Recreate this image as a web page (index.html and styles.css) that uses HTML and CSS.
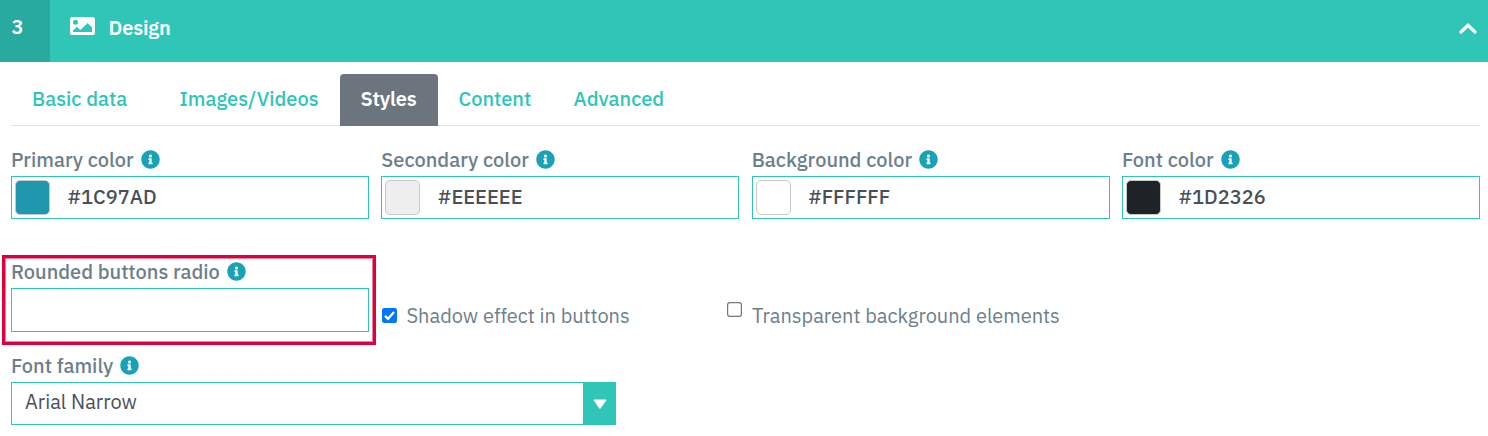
FILE: index.html
```
<!DOCTYPE html>
<html lang="en">
<head>
<meta charset="utf-8">
<title>Design</title>
<link rel="stylesheet" href="styles.css">
</head>
<body>
<svg class="defs" width="0" height="0">
  <symbol id="info" viewBox="0 0 512 512"><path fill="currentColor" d="M256 8C119 8 8 119 8 256s111 248 248 248 248-111 248-248S393 8 256 8zm0 110c23.200 0 42 18.800 42 42s-18.800 42-42 42-42-18.800-42-42 18.800-42 42-42zm56 254c0 6.600-5.400 12-12 12h-88c-6.600 0-12-5.400-12-12v-24c0-6.600 5.400-12 12-12h12v-64h-12c-6.600 0-12-5.400-12-12v-24c0-6.600 5.400-12 12-12h64c6.600 0 12 5.400 12 12v100h12c6.600 0 12 5.400 12 12v24z"/></symbol>
</svg>
<header class="header">
  <div class="step">3</div>
  <svg class="picture" viewBox="0 0 25 18"><path fill="#fff" fill-rule="evenodd" d="M2.200 0H22.800A2.200 2.200 0 0 1 25 2.200V15.800A2.200 2.200 0 0 1 22.800 18H2.200A2.200 2.200 0 0 1 0 15.800V2.200A2.200 2.200 0 0 1 2.200 0ZM5.500 2.800A2.500 2.500 0 1 0 5.500 7.800A2.500 2.500 0 1 0 5.500 2.800ZM3 15H22V10.500L17.600 6L10.500 13L7 9.800L3 13.500Z"/></svg>
  <h1 class="title">Design</h1>
  <svg class="chevron" viewBox="0 0 20 14"><path d="M3 11L10 4.200L17 11" fill="none" stroke="#fff" stroke-width="3.300" stroke-linecap="round"/></svg>
</header>
<main class="panel">
  <nav class="tabs">
    <a class="tab tab-basic">Basic data</a>
    <a class="tab tab-images">Images/Videos</a>
    <a class="tab tab-styles active">Styles</a>
    <a class="tab tab-content">Content</a>
    <a class="tab tab-advanced">Advanced</a>
  </nav>
  <section class="colors">
    <div class="field">
      <div class="label"><span>Primary color</span><svg class="info"><use href="#info"/></svg></div>
      <div class="box"><i class="swatch primary"></i><span>#1C97AD</span></div>
    </div>
    <div class="field">
      <div class="label"><span>Secondary color</span><svg class="info"><use href="#info"/></svg></div>
      <div class="box"><i class="swatch secondary"></i><span>#EEEEEE</span></div>
    </div>
    <div class="field">
      <div class="label"><span>Background color</span><svg class="info"><use href="#info"/></svg></div>
      <div class="box"><i class="swatch background"></i><span>#FFFFFF</span></div>
    </div>
    <div class="field">
      <div class="label"><span>Font color</span><svg class="info"><use href="#info"/></svg></div>
      <div class="box"><i class="swatch font"></i><span>#1D2326</span></div>
    </div>
  </section>
  <section class="options">
    <div class="highlight">
      <div class="label"><span>Rounded buttons radio</span><svg class="info"><use href="#info"/></svg></div>
      <div class="box empty"></div>
    </div>
    <div class="check shadow">
      <svg class="checkbox" viewBox="0 0 15 15"><rect width="15" height="15" rx="2.300" fill="#0075ff"/><path d="M3 7.800L6.100 10.800L12 3.900" fill="none" stroke="#fff" stroke-width="2.300"/></svg>
      <span>Shadow effect in buttons</span>
    </div>
    <div class="check transparent">
      <svg class="checkbox raised" viewBox="0 0 15 15"><rect x=".6" y=".6" width="13.800" height="13.800" rx="2.300" fill="#fff" stroke="#767676" stroke-width="1.200"/></svg>
      <span>Transparent background elements</span>
    </div>
  </section>
  <section class="family">
    <div class="label"><span>Font family</span><svg class="info"><use href="#info"/></svg></div>
    <div class="box select"><span class="family-name">Arial Narrow</span><div class="arrow"><svg width="14" height="11" viewBox="0 0 14 11"><path d="M1 .5H13Q13.600 .8 13.200 1.500L7.600 9.600Q7 10.300 6.400 9.600L.8 1.500Q.4 .8 1 .5Z" fill="#fff"/></svg></div></div>
  </section>
</main>
</body>
</html>
```
FILE: styles.css
```
* { box-sizing: border-box; }
body { margin: 0; background: #fff; font: 500 20px/26px "IBM Plex Sans", Roboto, sans-serif; color: #6c808c; white-space: nowrap; overflow: hidden; }
.defs { display: block; height: 0; }
.header { height: 62px; display: flex; align-items: flex-start; background: #2fc5b7; color: #fff; }
.step { width: 50px; height: 62px; padding: 14px 0 0 11.500px; background: #28aa9e; font-weight: 600; }
.picture { width: 25px; height: 18px; margin: 17px 0 0 20px; }
.title { font-size: 20px; line-height: 26px; font-weight: 600; letter-spacing: -.15px; margin: 15px 0 0 13.500px; }
.chevron { width: 20px; height: 14px; margin: 21px 10px 0 auto; }
.panel { padding: 12px 8px 0 11px; }
.tabs { display: flex; height: 52px; border-bottom: 1px solid #dee2e6; color: #2fc5b7; }
.tab { height: 52px; padding: 12px 0 0 20.500px; border-radius: 4px 4px 0 0; }
.tab-basic { width: 148px; padding-left: 21px; }
.tab-images { width: 181px; }
.tab-styles { width: 98px; }
.tab-content { width: 115px; }
.active { background: #6c757d; color: #fff; font-weight: 600; letter-spacing: -.2px; }
.colors { display: grid; grid-template-columns: repeat(4, 358px); justify-content: space-between; padding-top: 20px; }
.label { display: flex; height: 30px; padding-top: 1px; }
.info { width: 19px; height: 19px; margin: 3px 0 0 7px; color: #17a2b8; flex: none; }
.box { height: 43px; border: 1px solid #2fc5b7; display: flex; align-items: flex-start; color: #495057; }
.box span { padding-top: 7px; }
.swatch { width: 35px; height: 35px; border: 1px solid #c8c8c8; border-radius: 5px; margin: 3px 17.500px 0 3px; }
.primary { background: #1f98ae; }
.secondary { background: #eee; }
.background { background: #fff; }
.font { background: #1d2326; }
.options { display: flex; margin: 36px 0 0 -9px; height: 90px; }
.highlight { width: 374px; height: 90px; border: 3px solid #dc003c; padding: 0 4px 0 6px; box-shadow: inset 0 0 0 1px #ed7f9d; }
.empty { height: 44px; }
.check { display: flex; padding-top: 48px; font-weight: 400; }
.shadow { width: 346px; padding-left: 5.500px; }
.transparent { padding-left: 5px; }
.checkbox { width: 15px; height: 15px; margin: 5px 10px 0 0; }
.raised { margin-top: -1px; }
.family { width: 605px; padding-top: 7px; }
.select { justify-content: space-between; padding-left: 13px; font-weight: 400; }
.box .family-name { padding-top: 6px; }
.arrow { width: 33px; height: 43px; margin: -1px -1px 0 0; background: #2fc5b7; display: flex; justify-content: center; padding-top: 17px; }
```
